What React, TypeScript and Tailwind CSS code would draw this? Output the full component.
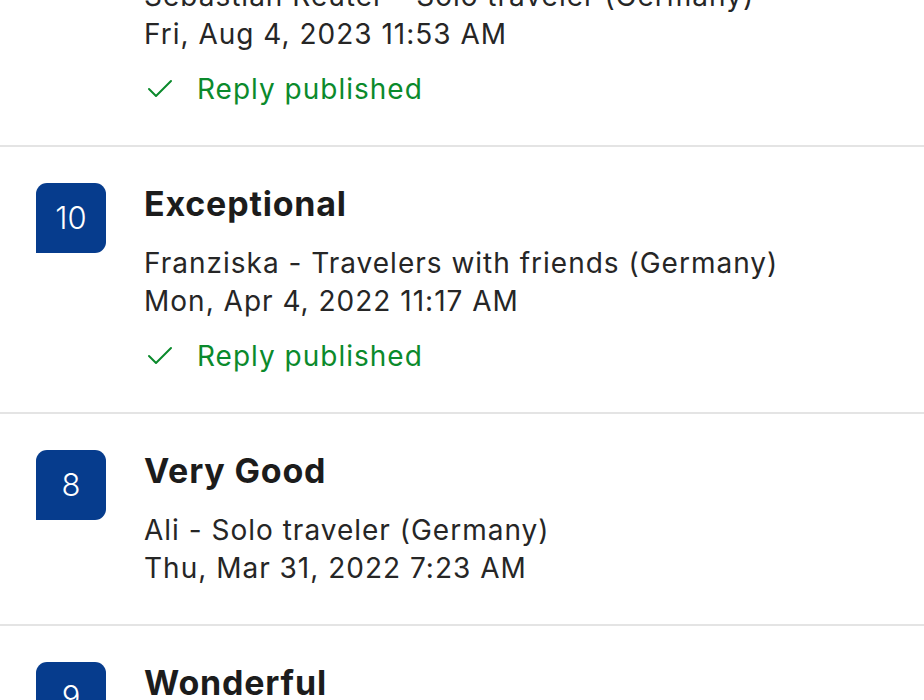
import React from "react";

type Review = {
  score: number;
  label: string;
  guest: string;
  date: string;
  replied: boolean;
};

const reviews: Review[] = [
  { score: 9, label: "Wonderful", guest: "Sebastian Reuter - Solo traveler (Germany)", date: "Fri, Aug 4, 2023 11:53 AM", replied: true },
  { score: 10, label: "Exceptional", guest: "Franziska - Travelers with friends (Germany)", date: "Mon, Apr 4, 2022 11:17 AM", replied: true },
  { score: 8, label: "Very Good", guest: "Ali - Solo traveler (Germany)", date: "Thu, Mar 31, 2022 7:23 AM", replied: false },
  { score: 9, label: "Wonderful", guest: "Lena - Couple (Germany)", date: "Sun, Mar 27, 2022 6:02 PM", replied: false },
];

const CheckIcon = () => (
  <svg width="26" height="22" viewBox="0 0 26 22" fill="none">
    <polyline points="2,11 9,18 24,3" stroke="#0b8a2c" strokeWidth="2" strokeLinecap="round" strokeLinejoin="round" />
  </svg>
);

const ReviewRow = ({ review }: { review: Review }) => (
  <div className="flex items-start gap-[38px] pl-[36px] pt-[37px] pb-[37px] border-b-2 border-[#e4e4e4]">
    <div className="w-[70px] h-[70px] mt-[-1px] shrink-0 flex items-center justify-center bg-[#063c8d] text-white text-[31px] font-light rounded-t-[11px] rounded-br-[11px] rounded-bl-none">
      {review.score}
    </div>
    <div className="flex flex-col">
      <div className="text-[34px] leading-[40px] font-bold text-[#1c1c1c] tracking-[0.8px]">{review.label}</div>
      <div className="mt-[20px] text-[28px] leading-[38px] text-[#262626] tracking-[1px]">{review.guest}</div>
      <div className="text-[28px] leading-[38px] text-[#262626] tracking-[1px]">{review.date}</div>
      {review.replied && (
        <div className="mt-[17px] flex items-center h-[38px] text-[28px] text-[#0b8a2c] tracking-[1px]">
          <span className="ml-[3px] mr-[24px] flex items-center">
            <CheckIcon />
          </span>
          Reply published
        </div>
      )}
    </div>
  </div>
);

export default function App() {
  return (
    <div className="w-[924px] h-[700px] overflow-hidden bg-white" style={{ fontFamily: "Inter, 'Noto Sans', sans-serif" }}>
      <div className="mt-[-120px]">
        {reviews.map((r, i) => (
          <ReviewRow key={i} review={r} />
        ))}
      </div>
    </div>
  );
}
